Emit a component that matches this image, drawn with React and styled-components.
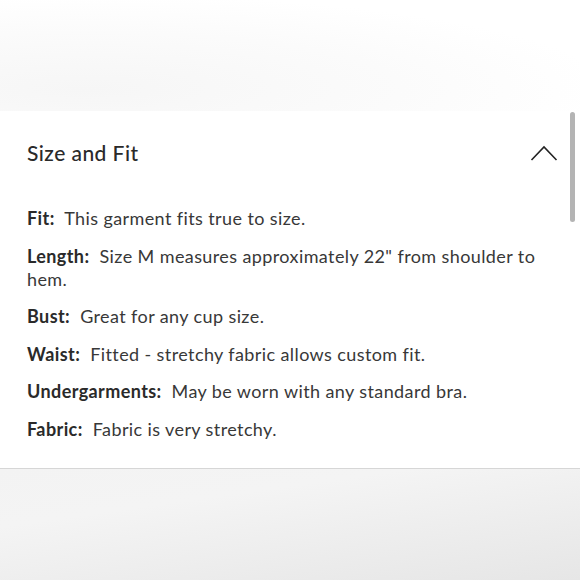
import React from "react";
import styled, { createGlobalStyle } from "styled-components";

const GlobalStyle = createGlobalStyle`
body {
  margin: 0;
  background: #ffffff;
  font-family: "Lato", "Liberation Sans", sans-serif;
}
`

const Page = styled.div`
width: 580px;
height: 580px;
display: flex;
flex-direction: column;
overflow: hidden;
`

const TopBand = styled.div`
height: 111px;
background: radial-gradient(ellipse at 15% 80%, #f6f6f6 0%, #fbfbfb 45%, #ffffff 75%);
`

const Panel = styled.section`
position: relative;
background: #ffffff;
padding: 30px 22px 27px 27px;
border-bottom: 1px solid #d6d6d6;
`

const Header = styled.div`
display: flex;
justify-content: space-between;
align-items: center;
height: 24px;
`

const Title = styled.h2`
margin: 0;
font-size: 21px;
font-weight: 500;
line-height: 24px;
color: #2a2a2a;
letter-spacing: 0.45px;
`

const Chevron = styled.svg`
width: 28px;
height: 16px;
margin-top: -1px;
`

const Body = styled.div`
margin-top: 42px;
display: flex;
flex-direction: column;
gap: 14.5px;
max-width: 524px;
`

const Row = styled.p`
margin: 0;
font-size: 18px;
line-height: 23px;
letter-spacing: 0.4px;
color: #383838;
`

const Label = styled.b`
font-weight: 700;
color: #2a2a2a;
`

const Scrollbar = styled.div`
position: absolute;
right: 5px;
top: 1px;
width: 5px;
height: 110px;
border-radius: 3px;
background: #b4b4b4;
`

const BottomBand = styled.div`
flex: 1;
background: linear-gradient(172deg, #f3f3f3 0%, #f4f4f4 30%, #e6e6e6 100%);
`

const specs = [
  ["Fit:", "This garment fits true to size."],
  ["Length:", "Size M measures approximately 22\" from shoulder to hem."],
  ["Bust:", "Great for any cup size."],
  ["Waist:", "Fitted - stretchy fabric allows custom fit."],
  ["Undergarments:", "May be worn with any standard bra."],
  ["Fabric:", "Fabric is very stretchy."],
];

const App = () => {
  return (
    <Page>
      <GlobalStyle />
      <TopBand />
      <Panel>
        <Scrollbar />
        <Header>
          <Title>Size and Fit</Title>
          <Chevron viewBox="0 0 28 16">
            <polyline points="1.5,15 14,2 26.5,15" fill="none" stroke="#222" strokeWidth="1.6" />
          </Chevron>
        </Header>
        <Body>
          {specs.map(([label, text]) => (
            <Row key={label}>
              <Label>{label}</Label>{"\u00a0 "}{text}
            </Row>
          ))}
        </Body>
      </Panel>
      <BottomBand />
    </Page>
  );
};

export default App;
